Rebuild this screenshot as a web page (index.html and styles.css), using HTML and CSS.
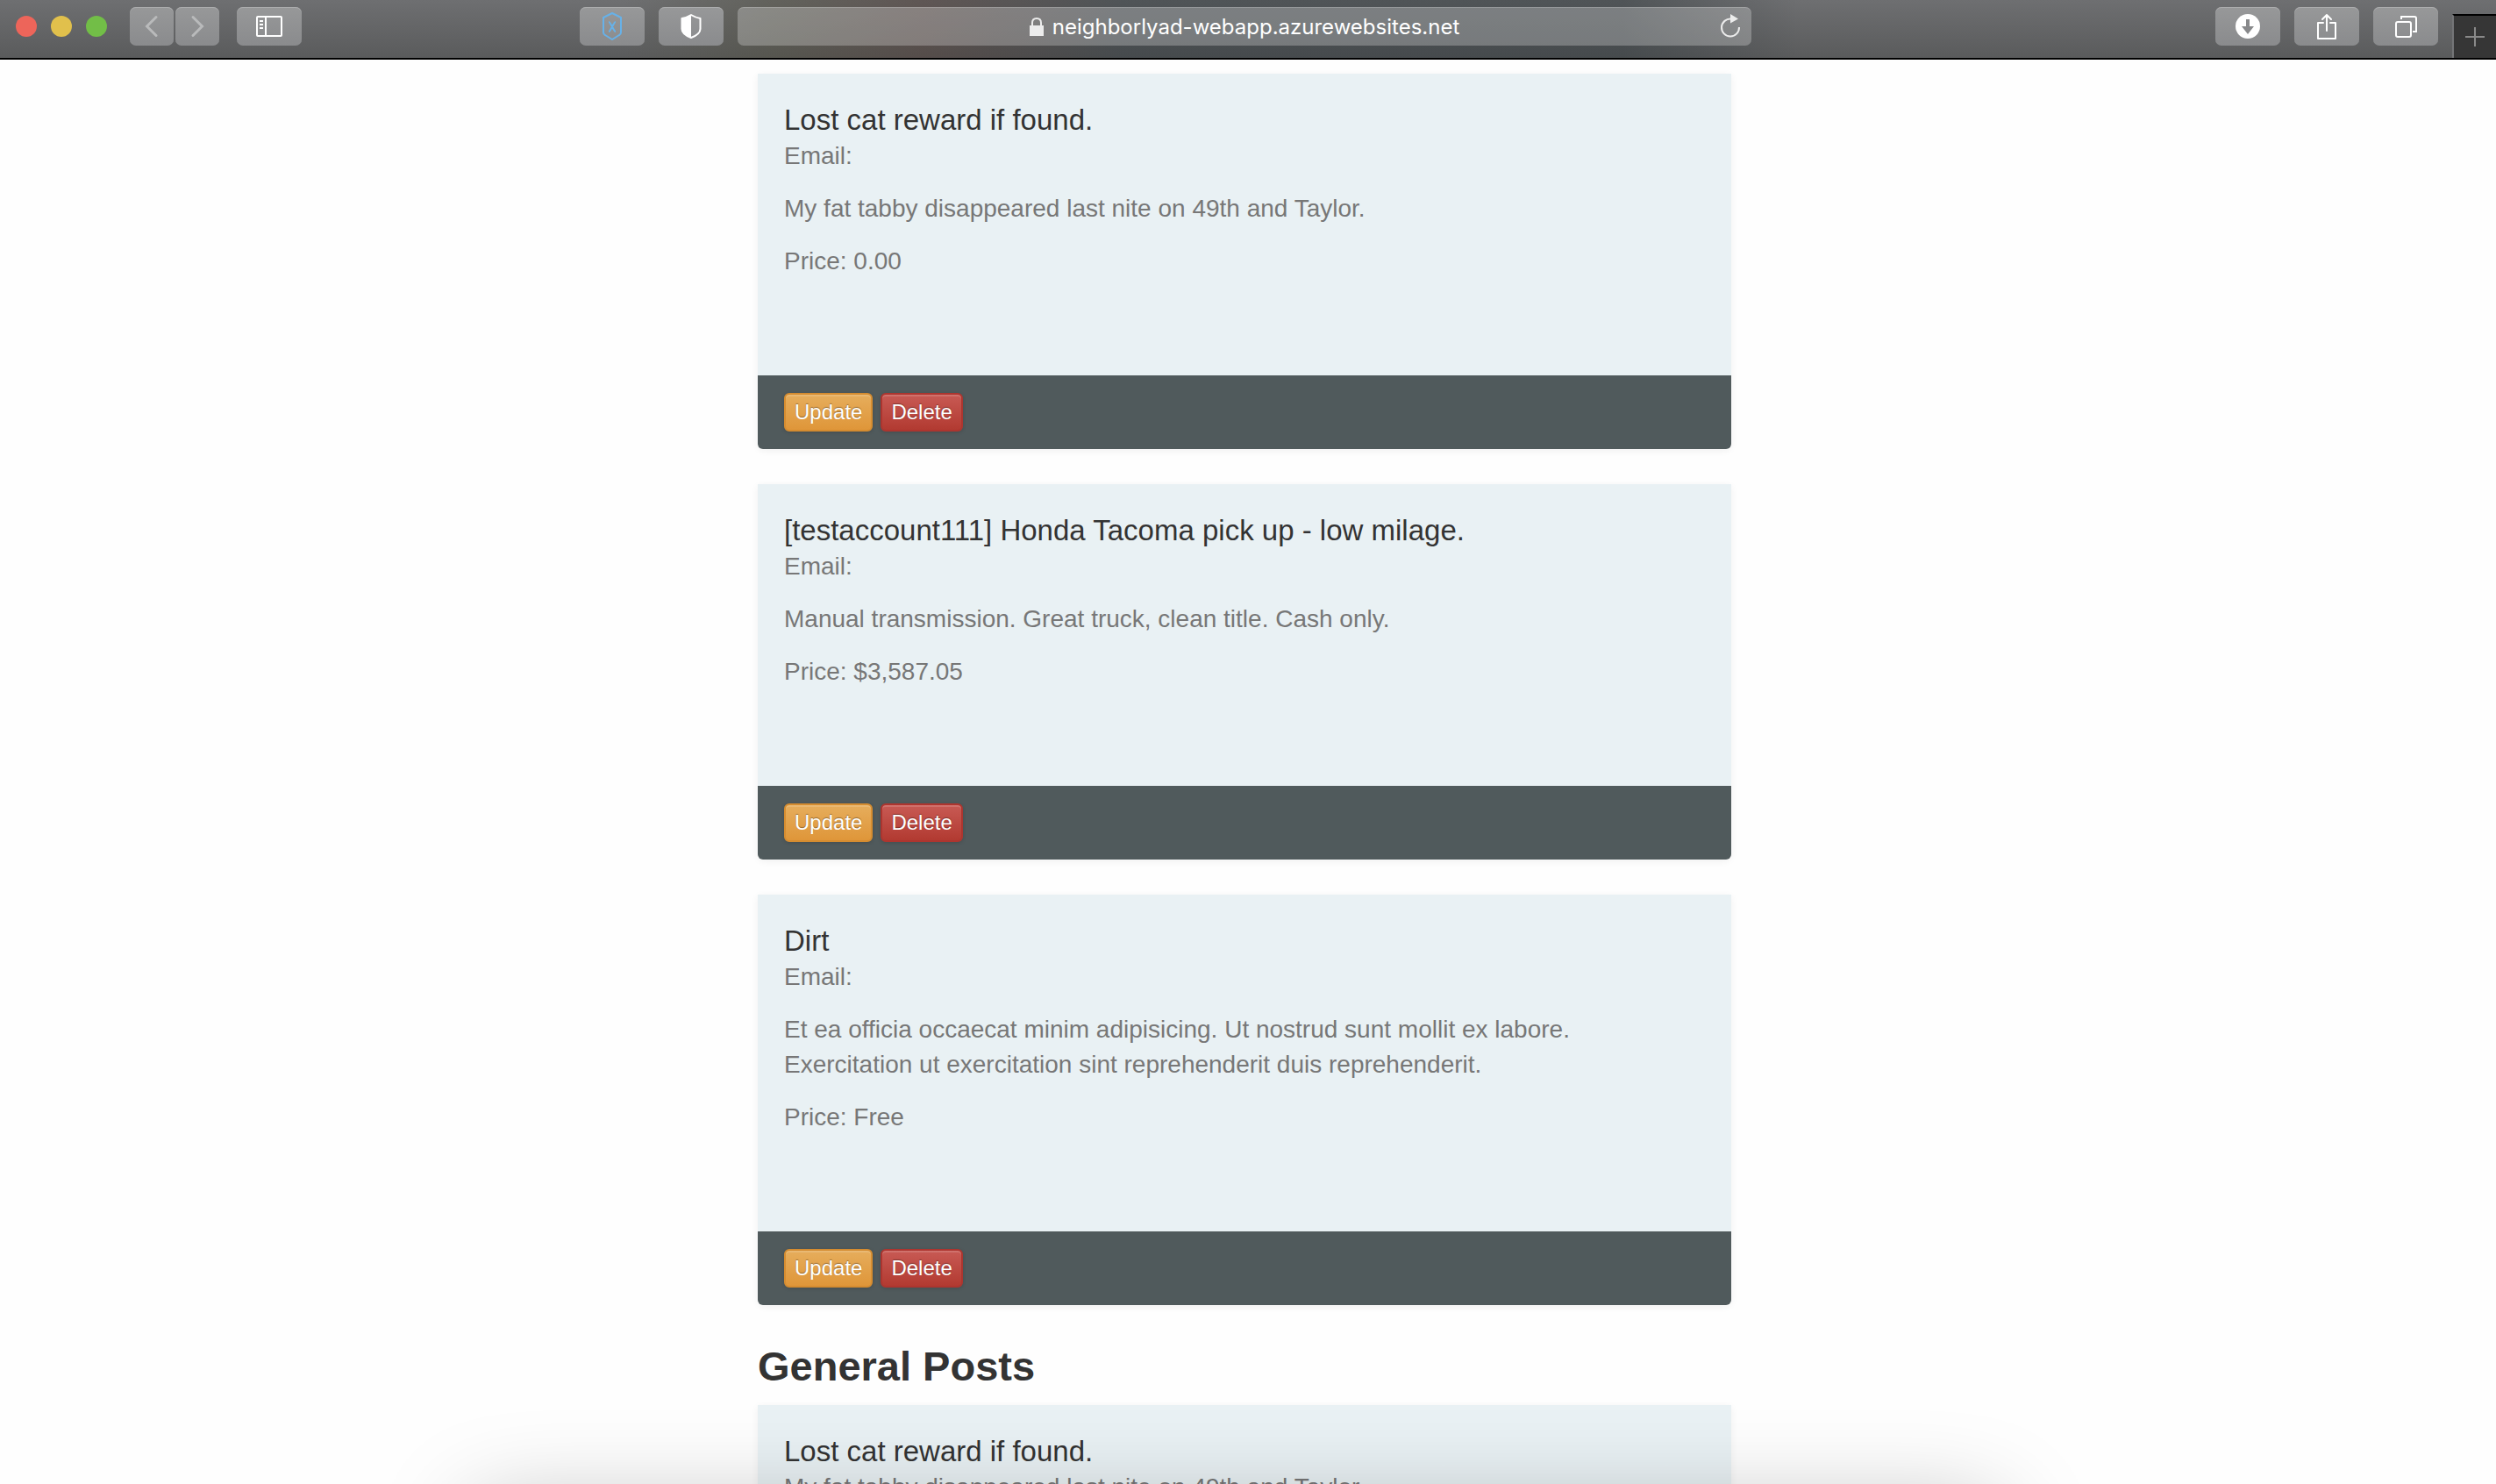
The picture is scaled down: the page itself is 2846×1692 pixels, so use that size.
FILE: index.html
```html
<!DOCTYPE html>
<html lang="en">
<head>
<meta charset="utf-8">
<title>General Posts</title>
<link rel="stylesheet" href="styles.css">
</head>
<body>
<header class="toolbar">
  <div class="lights"><span class="light close"></span><span class="light minimise"></span><span class="light expand"></span></div>
  <div class="history">
    <button class="tool nav" aria-label="Back"><svg width="50" height="44" viewBox="0 0 50 44"><path d="M30 11.500 19.500 22 30 32.500" stroke="#b9babb" stroke-width="3" stroke-linecap="round"/></svg></button>
    <button class="tool nav" aria-label="Forward"><svg width="50" height="44" viewBox="0 0 50 44"><path d="M20 11.500 30.500 22 20 32.500" stroke="#b9babb" stroke-width="3" stroke-linecap="round"/></svg></button>
  </div>
  <button class="tool" aria-label="Sidebar"><svg width="32" height="26" viewBox="0 0 32 26"><rect x="2" y="2" width="28" height="22" rx="1" stroke="#fff" stroke-width="2"/><path d="M12 2v22M5 7h4M5 11h4M5 15h4" stroke="#fff" stroke-width="2"/></svg></button>
  <div class="address-group">
    <button class="tool" aria-label="Extension"><svg width="28" height="36" viewBox="0 0 28 36"><path d="M14 3 24 8v17q0 2-2 3l-8 5-8-5q-2-1-2-3V8z" stroke="#67b1e8" stroke-width="2" stroke-linejoin="round"/><path d="M10 13q1 0 2 2l4 7q1 2 2 2M18 13q-1 0-2 2l-4 7q-1 2-2 2" stroke="#67b1e8" stroke-width="2"/></svg></button>
    <button class="tool" aria-label="Privacy report"><svg width="28" height="30" viewBox="0 0 28 30"><path d="M14 2q5 3 10.500 4v12q0 6-10.500 10Q3.500 24 3.500 18V6Q9 5 14 2z" stroke="#fff" stroke-width="2" stroke-linejoin="round"/><path d="M14 2v26Q3.500 24 3.500 18V6Q9 5 14 2z" fill="#fff"/></svg></button>
    <div class="address">
      <a class="url" href="#"><svg width="16" height="22" viewBox="0 0 16 22"><rect y="9" width="16" height="12" fill="#ececec"/><path d="M3 10V6q0-5 5-5t5 5v4" stroke="#ececec" stroke-width="2"/></svg><span>neighborlyad-webapp.azurewebsites.net</span></a>
      <button class="reload" aria-label="Reload"><svg width="24" height="28" viewBox="0 0 24 28"><path d="M13 5.500A10 10 0 1 0 22 15" stroke="#ececec" stroke-width="2"/><path d="M12 0l9 5.500-9 5z" fill="#ececec"/></svg></button>
    </div>
  </div>
  <div class="actions">
    <button class="tool" aria-label="Downloads"><svg width="28" height="28" viewBox="0 0 28 28"><circle cx="14" cy="14" r="14" fill="#fff"/><path d="M12 6h4v8h5l-7 9-7-9h5z" fill="#88898b"/></svg></button>
    <button class="tool" aria-label="Share"><svg width="26" height="32" viewBox="0 0 26 32"><path d="M9 12H3v18h20V12h-6M13 21V3M8 8l5-5 5 5" stroke="#fff" stroke-width="2" stroke-linejoin="round" stroke-linecap="round"/></svg></button>
    <button class="tool" aria-label="Tab overview"><svg width="26" height="26" viewBox="0 0 26 26"><rect x="2" y="8" width="17" height="17" rx="2" stroke="#fff" stroke-width="2"/><path d="M8 5V2h15q2 0 2 2v15h-4" stroke="#fff" stroke-width="2"/></svg></button>
  </div>
  <button class="new-tab" aria-label="New tab"><svg width="22" height="22" viewBox="0 0 22 22"><path d="M0 11h22M11 0v22" stroke="#898989" stroke-width="2"/></svg></button>
</header>
<main class="page">
  <div class="posts">
    <article class="card">
      <div class="card-body">
        <h2>Lost cat reward if found.</h2>
        <p>Email:</p>
        <p>My fat tabby disappeared last nite on 49th and Taylor.</p>
        <p>Price: 0.00</p>
      </div>
      <footer><button class="btn update">Update</button><button class="btn delete">Delete</button></footer>
    </article>
    <article class="card">
      <div class="card-body">
        <h2>[testaccount111] Honda Tacoma pick up - low milage.</h2>
        <p>Email:</p>
        <p>Manual transmission. Great truck, clean title. Cash only.</p>
        <p>Price: $3,587.05</p>
      </div>
      <footer><button class="btn update">Update</button><button class="btn delete">Delete</button></footer>
    </article>
    <article class="card">
      <div class="card-body">
        <h2>Dirt</h2>
        <p>Email:</p>
        <p>Et ea officia occaecat minim adipisicing. Ut nostrud sunt mollit ex labore. Exercitation ut exercitation sint reprehenderit duis reprehenderit.</p>
        <p>Price: Free</p>
      </div>
      <footer><button class="btn update">Update</button><button class="btn delete">Delete</button></footer>
    </article>
    <h1>General Posts</h1>
    <article class="card">
      <div class="card-body">
        <h2>Lost cat reward if found.</h2>
        <p>My fat tabby disappeared last nite on 49th and Taylor.</p>
      </div>
    </article>
  </div>
</main>
<div class="dock-shadow"></div>
</body>
</html>
```
FILE: styles.css
```css
* { box-sizing: border-box; }
body {
  margin: 0;
  height: 100vh;
  display: flex;
  flex-direction: column;
  overflow: hidden;
  background: #fefefe;
  color: #333;
  font: 28px/40px "Liberation Sans", Arial, sans-serif;
}
button { font: inherit; border: 0; padding: 0; }
svg { display: block; fill: none; }

/* Browser toolbar */
.toolbar {
  flex: none;
  height: 68px;
  padding: 8px 0 0 18px;
  display: flex;
  align-items: flex-start;
  border-bottom: 2px solid #000;
  background:
    linear-gradient(90deg, transparent 25%, rgba(80, 78, 60, .4) 31%, rgba(80, 62, 56, .5) 37%, rgba(50, 58, 62, .5) 45%, rgba(50, 58, 62, .5) 65%, transparent 72%),
    linear-gradient(#6e6f71, #5a5b5c);
}
.lights { display: flex; gap: 16px; padding-top: 10px; margin-right: 26px; }
.light { width: 24px; height: 24px; border-radius: 50%; }
.close { background: #ed655a; }
.minimise { background: #e1c04c; }
.expand { background: #72be47; }
.history { display: flex; gap: 2px; margin-right: 20px; }
.tool {
  width: 74px;
  height: 44px;
  flex: none;
  display: flex;
  align-items: center;
  justify-content: center;
  border-radius: 7px;
  background: linear-gradient(#979899, #8a8b8d);
  box-shadow: inset 0 1px #acadae;
}
.nav { width: 50px; }
.address-group { flex: 1; display: flex; gap: 16px; margin-left: 317px; }
.address {
  flex: 1;
  height: 44px;
  display: flex;
  align-items: center;
  border-radius: 7px;
  background: rgba(255, 255, 255, .26);
  box-shadow: inset 0 1px rgba(255, 255, 255, .2);
  padding-right: 12px;
}
.url {
  flex: 1;
  display: flex;
  align-items: center;
  justify-content: center;
  gap: 10px;
  padding: 2px 0 0 36px;
  color: #fff;
  text-decoration: none;
  font: 24px/32px Inter, sans-serif;
}
.reload { background: none; }
.actions { display: flex; gap: 16px; margin: 0 16px 0 529px; }
.new-tab {
  width: 50px;
  height: 50px;
  margin-top: 8px;
  display: flex;
  align-items: center;
  justify-content: center;
  background: #363636;
  border-top: 2px solid #000;
  border-left: 2px solid #747577;
}

/* Posts */
.page { flex: 1; min-height: 0; overflow: hidden; padding: 16px 8px 0 0; }
.posts { width: 1110px; max-width: 100%; margin: 0 auto; }
.card {
  margin-bottom: 40px;
  background: #e9f1f4;
  border-radius: 0 0 8px 8px;
  box-shadow: 0 2px 8px rgba(0, 0, 0, .06);
}
.card-body { padding: 32px 50px 90px 30px; color: #777; }
.card h2 { margin: 0; font-size: 33px; line-height: 42px; font-weight: 400; color: #333; }
.card p { margin: 0 0 20px; }
.card footer {
  display: flex;
  gap: 9px;
  padding: 20px 30px;
  background: #505a5c;
  border-radius: 0 0 6px 6px;
}
.btn {
  height: 44px;
  padding: 0 10px;
  border: 2px solid;
  border-radius: 6px;
  color: #fff;
  font-size: 24px;
  line-height: 36px;
  text-shadow: 0 -1px 1px rgba(0, 0, 0, .35);
  box-shadow: inset 0 2px rgba(255, 255, 255, .15), 0 1px 4px rgba(0, 0, 0, .15);
}
.update { background: linear-gradient(#e6ad5c, #df9639); border-color: #d58c30; }
.delete { background: linear-gradient(#c85a54, #b23a31); border-color: #ad352f; }
h1 { margin: 0 0 14px; font-size: 47px; line-height: 60px; font-weight: 700; }

.dock-shadow {
  position: fixed;
  left: 19%;
  right: 20%;
  bottom: -140px;
  height: 110px;
  box-shadow: 0 0 110px rgba(0, 0, 0, .28);
  pointer-events: none;
}
```
